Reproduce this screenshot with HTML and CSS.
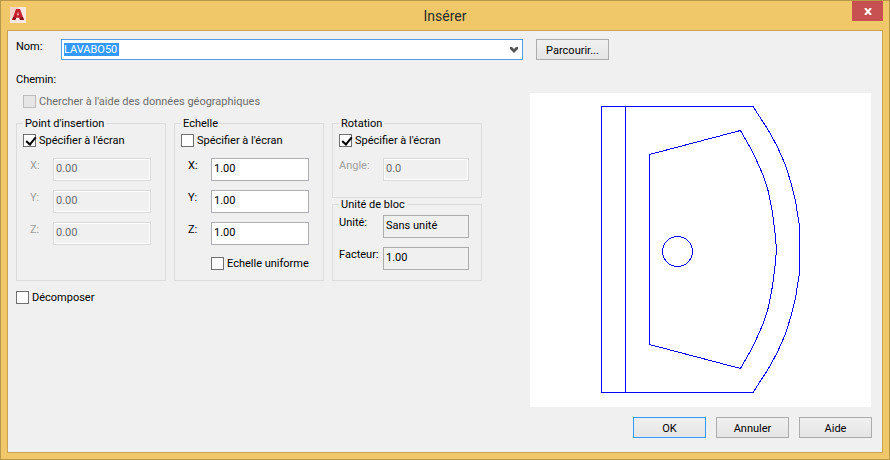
FILE: index.html
```html
<!DOCTYPE html>
<html lang="fr">
<head>
<meta charset="utf-8">
<title>Insérer</title>
<link rel="stylesheet" href="styles.css">
</head>
<body>
<form class="window">
  <header class="titlebar">
    <svg class="app-icon" width="16" height="16" viewBox="0 0 16 16" aria-hidden="true">
      <rect width="16" height="16" fill="#fbe9e1"/>
      <path d="M0 0h9L0 12z" fill="#f6d3c8"/>
      <path d="M6 2h4l4 11h-4l-.6-2.200H6.200L5.300 13H2z" fill="#c2202c"/>
      <path d="M2 13l1-3 3.200.8L5.300 13zM10 13l-.6-2.200L13 10l1 3z" fill="#8d1420"/>
      <path d="M8 4.500L9 8.200H6.900z" fill="#f3b9b3"/>
    </svg>
    <h1 class="title">Insérer</h1>
    <button class="close" type="button" aria-label="Fermer">
      <svg width="8" height="7" viewBox="0 0 8 7" aria-hidden="true"><path d="M1 0l6 7M7 0L1 7" stroke="#fff" stroke-width="2"/></svg>
    </button>
  </header>

  <main class="client">
    <div class="name-row">
      <label class="name-label" for="name">Nom:</label>
      <div class="combo">
        <select class="combo-select" id="name"><option>LAVABO50</option></select>
        <svg class="chevron" width="8" height="6" viewBox="0 0 8 6" aria-hidden="true"><path d="M0 0h2l2 2 2-2h2v2L4 6 0 2z" fill="#555"/></svg>
      </div>
      <button class="button" type="button">Parcourir...</button>
    </div>

    <div class="body">
      <section class="settings">
        <p class="path">Chemin:</p>
        <label class="check geo"><input type="checkbox" disabled>Chercher à l'aide des données géographiques</label>

        <div class="groups">
          <fieldset class="group">
            <legend>Point d'insertion</legend>
            <label class="check"><input type="checkbox" checked>Spécifier à l'écran</label>
            <div class="fields indent">
              <label class="off" for="px">X:</label><input class="field" id="px" type="text" value="0.00" disabled>
              <label class="off" for="py">Y:</label><input class="field" id="py" type="text" value="0.00" disabled>
              <label class="off" for="pz">Z:</label><input class="field" id="pz" type="text" value="0.00" disabled>
            </div>
          </fieldset>

          <fieldset class="group">
            <legend>Echelle</legend>
            <label class="check"><input type="checkbox">Spécifier à l'écran</label>
            <div class="fields indent">
              <label for="sx">X:</label><input class="field" id="sx" type="text" value="1.00">
              <label for="sy">Y:</label><input class="field" id="sy" type="text" value="1.00">
              <label for="sz">Z:</label><input class="field" id="sz" type="text" value="1.00">
              <label class="check uniform"><input type="checkbox">Echelle uniforme</label>
            </div>
          </fieldset>

          <div class="stack">
            <fieldset class="group">
              <legend>Rotation</legend>
              <label class="check"><input type="checkbox" checked>Spécifier à l'écran</label>
              <div class="fields">
                <label class="off" for="angle">Angle:</label><input class="field" id="angle" type="text" value="0.0" disabled>
              </div>
            </fieldset>
            <fieldset class="group unit">
              <legend>Unité de bloc</legend>
              <div class="fields">
                <label for="unit">Unité:</label><input class="field" id="unit" type="text" value="Sans unité" readonly>
                <label for="factor">Facteur:</label><input class="field" id="factor" type="text" value="1.00" readonly>
              </div>
            </fieldset>
          </div>
        </div>

        <label class="check explode"><input type="checkbox">Décomposer</label>
      </section>

      <section class="side">
        <svg class="preview" viewBox="0 0 341 314" role="img" aria-label="LAVABO50">
          <g fill="none" stroke="#00f" shape-rendering="crispEdges">
            <path d="M223 13.500H71.500v286H223L238.500 275.500 247.500 259 255.500 241 261 223 265.500 205 269.500 179.500V133.500L265.500 108 261 90 255.500 72 247.500 54 238.500 37.500z"/>
            <path d="M95.500 13.500v286"/>
            <path d="M119.500 61.500L210.500 37.500 223.500 60.500 233 82 238.500 99 242.500 120 245 140 246.500 156.500 245 173 242.500 193 238.500 214 233 231 223.500 252.500 210.500 275.500 119.500 251.500z"/>
            <circle cx="147.500" cy="158.500" r="15"/>
          </g>
        </svg>
        <div class="actions">
          <button class="button default" type="submit">OK</button>
          <button class="button" type="button">Annuler</button>
          <button class="button" type="button">Aide</button>
        </div>
      </section>
    </div>
  </main>
</form>
</body>
</html>
```
FILE: styles.css
```css
* { box-sizing: border-box; }

body {
  margin: 0;
  font: 11px/15px Roboto, "Liberation Sans", sans-serif;
  color: #000;
}

input, select, button { font: inherit; color: inherit; }

.window {
  display: flex;
  flex-direction: column;
  min-height: 100vh;
  padding: 0 6px 6px;
  background: #f0c869;
  border: 1px solid #b8974b;
}

.titlebar {
  display: grid;
  grid-template-columns: 31px 1fr 31px;
  height: 29px;
}

.app-icon { margin: 6px 0 0 3px; }

.title {
  margin: 0;
  font: 14px/30px Roboto, sans-serif;
  color: #2b2b2b;
  text-align: center;
}

.close {
  display: flex;
  align-items: center;
  justify-content: center;
  width: 31px;
  height: 20px;
  padding: 0;
  border: 0;
  background: #c75050;
}

.client {
  flex: 1;
  padding: 8px 11px 8px 8px;
  background: #f0f0f0;
  border: 1px solid #c9a352;
}

.name-row { display: flex; align-items: flex-start; }
.name-label { width: 45px; }

.combo {
  position: relative;
  flex: 0 1 462px;
  margin-right: 13px;
}

.combo-select {
  display: block;
  width: 100%;
  height: 21px;
  padding: 0 2px;
  appearance: none;
  color: #fff;
  background: linear-gradient(#39f, #39f) 2px 3px / 55px 13px no-repeat #fff;
  border: 1px solid #569de5;
  border-radius: 0;
}

.chevron { position: absolute; right: 5px; top: 8px; }

.button {
  width: 73px;
  height: 21px;
  padding: 1px 0 0;
  background: linear-gradient(#f0f0f0, #e5e5e5);
  border: 1px solid #acacac;
}

.button.default { border: 1px solid #3399ff; }

.body { display: flex; gap: 49px; margin-top: 12px; }
.settings { width: 465px; flex: none; }
.side { flex: 1; margin-top: 21px; }

.path { margin: 0; }

.check {
  display: flex;
  align-items: center;
  gap: 3px;
  height: 14px;
}

.check input {
  width: 13px;
  height: 13px;
  margin: 0;
  appearance: none;
  background: #fff;
  border: 1px solid #707070;
}

.check input:checked::after {
  content: "";
  display: block;
  width: 4px;
  height: 8px;
  margin: 0 0 0 4px;
  border: solid #000;
  border-width: 0 2px 2px 0;
  transform: rotate(40deg);
}

.check input:disabled { background: #e6e6e6; border-color: #bcbcbc; }

.geo { margin: 7px 0 0 7px; color: #6d6d6d; }

.groups {
  display: grid;
  grid-template-columns: repeat(3, 150px);
  gap: 8px;
  margin-top: 8px;
}

.group {
  min-width: 0;
  margin: 0;
  padding: 2px 6px 8px;
  border: 1px solid #dcdcdc;
}

.group legend { padding: 0 2px; }

.stack { display: flex; flex-direction: column; }
.stack .group { padding-bottom: 16px; }
.stack .unit { margin-top: -1px; padding-bottom: 10px; }
.stack .unit .fields { margin-top: 1px; }

.fields {
  display: grid;
  grid-template-columns: 44px 86px;
  row-gap: 9px;
  margin-top: 11px;
}

.indent {
  grid-template-columns: 23px 98px;
  padding-left: 7px;
}

.off { color: #a0a0a0; }

.field {
  width: 100%;
  height: 23px;
  padding: 0 2px 2px;
  background: #fff;
  border: 1px solid #abadb3;
}

.field:read-only { background: #f0f0f0; border-color: #acacac; }

.field:disabled {
  color: #6d6d6d;
  background: #f0f0f0;
  border-color: #d9d9d9;
  box-shadow: inset 0 0 0 1px #fff;
}

.uniform { grid-column: 2; margin-top: 2px; }

.explode { margin-top: 9px; }

.preview { display: block; width: 100%; background: #fff; }

.actions {
  display: flex;
  justify-content: flex-end;
  gap: 10px;
  margin: 10px -1px 0 0;
}
```
